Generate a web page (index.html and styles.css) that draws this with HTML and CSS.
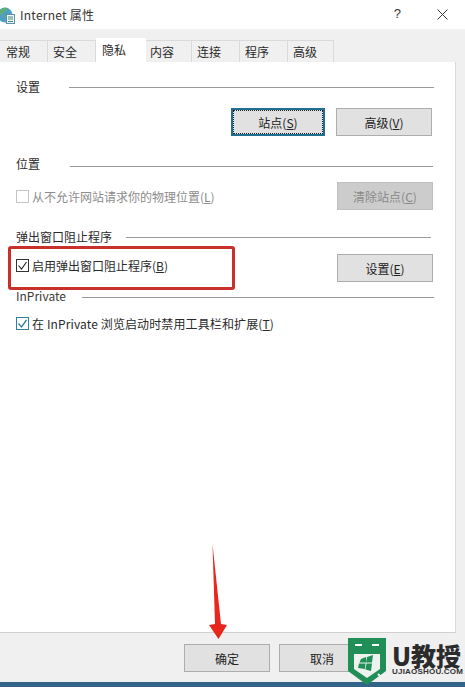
FILE: index.html
```html
<!DOCTYPE html>
<html lang="zh">
<head>
<meta charset="utf-8">
<title>Internet 属性</title>
<link rel="stylesheet" href="styles.css">
</head>
<body>
<div class="dialog">
  <header class="titlebar">
    <svg class="globe" width="16" height="20" viewBox="0 0 16 20">
      <circle cx="6" cy="9" r="7.500" fill="#4f9fc4"/>
      <path d="M0 6c2-4 5-5 8-4 1 2-1 3-3 4 0 2-2 3-4 2zM6 9c2-1 4 0 4 2s-2 3-3 2-2-3-1-4z" fill="#5fae7a"/>
      <rect x="7.500" y="8.500" width="8" height="9" fill="#f4f8fb" stroke="#5a8fb0"/>
      <path d="M9 11h5M9 13h5M9 15.500h5" stroke="#3c8c70"/>
    </svg>
    <span class="title">Internet 属性</span>
    <span class="help">?</span>
    <svg class="close" width="11" height="11" viewBox="0 0 11 11"><path d="M.5.5l10 10M10.500.5l-10 10" stroke="#333" fill="none"/></svg>
  </header>
  <nav class="tabs">
    <span class="tab first">常规</span>
    <span class="tab">安全</span>
    <span class="tab active">隐私</span>
    <span class="tab after-active">内容</span>
    <span class="tab">连接</span>
    <span class="tab">程序</span>
    <span class="tab last">高级</span>
  </nav>
  <main class="panel">
    <div class="heading h-settings"><span>设置</span><i class="rule"></i></div>
    <div class="row row-settings">
      <button class="btn btn-focus">站点(<u>S</u>)</button>
      <button class="btn btn-adv">高级(<u>V</u>)</button>
    </div>
    <div class="heading h-location"><span>位置</span><i class="rule"></i></div>
    <div class="row row-location">
      <label class="check disabled"><span class="box"></span>从不允许网站请求你的物理位置(<u>L</u>)</label>
      <button class="btn btn-disabled">清除站点(<u>C</u>)</button>
    </div>
    <div class="heading h-popup"><span>弹出窗口阻止程序</span><i class="rule"></i></div>
    <div class="row row-popup">
      <label class="check check-up"><span class="box">
        <svg width="13" height="13" viewBox="0 0 13 13"><path d="M2.500 6.500l3 3.500 5-7" fill="none" stroke="#222" stroke-width="1.100"/></svg>
      </span>启用弹出窗口阻止程序(<u>B</u>)</label>
      <button class="btn">设置(<u>E</u>)</button>
    </div>
    <div class="heading h-private"><span>InPrivate</span><i class="rule"></i></div>
    <div class="row row-private">
      <label class="check"><span class="box box-blue">
        <svg width="13" height="13" viewBox="0 0 13 13"><path d="M2.500 6.500l3 3.500 5-7" fill="none" stroke="#2f7f9f" stroke-width="1.300"/></svg>
      </span><span class="private-text">在 InPrivate 浏览启动时禁用工具栏和扩展(<u>T</u>)</span></label>
    </div>
  </main>
  <footer class="footer">
    <button class="btn btn-foot">确定</button>
    <button class="btn btn-foot">取消</button>
  </footer>
  <div class="taskbar"></div>
</div>

<div class="highlight"></div>

<svg class="arrow" width="24" height="100" viewBox="0 0 24 100">
  <path d="M3.500 0L12 80l6 1-8.500 14L0 81l6-1z" fill="#e8261c"/>
</svg>

<div class="mark">
  <svg class="shield" width="39" height="49" viewBox="0 0 39 49">
    <path d="M0 1h38v33L19 48 0 34z" fill="#1f8f57"/>
    <path d="M6 17h26v15L19 41 6 32z" fill="#eef2ef"/>
    <path d="M7 8h7M24 8h7" stroke="#fff" stroke-width="2"/>
    <path d="M13 22l5-2v5.500h-6.500zM19 20l6-2-1 7.500h-6zM11 26.500h6.500L17 32l-7-1zM18.500 26.500H24L23 34l-5.500-1.500z" fill="#1f8f57"/>
    <path d="M30 37l7 7" stroke="#f0f0f0" stroke-width="2"/>
  </svg>
  <div class="mark-text">
    <span class="mark-big">U教授</span>
    <span class="mark-small">UJIAOSHOU.COM</span>
  </div>
</div>
</body>
</html>
```

FILE: styles.css
```css
* { box-sizing: border-box; }
html, body { margin: 0; padding: 0; }
body {
  width: 465px;
  height: 687px;
  overflow: hidden;
  position: relative;
  background: #f0f0f0;
  font-family: "Noto Sans CJK SC", "Noto Sans", sans-serif;
  font-size: 12px;
  color: #2a2a2a;
}
u { text-decoration: underline; }

.dialog { display: flex; flex-direction: column; height: 687px; }

.titlebar {
  height: 29px;
  background: #fff;
  display: flex;
  align-items: center;
  flex: none;
}
.globe { margin-left: -1px; margin-top: 3px; flex: none; }
.title { margin-left: 5px; margin-bottom: 1px; font-size: 12px; color: #333; letter-spacing: .25px; }
.help { margin-left: auto; margin-bottom: 2px; font-size: 13px; color: #333; font-family: "Liberation Sans", sans-serif; }
.close { margin-left: 36px; margin-right: 17px; }

.tabs {
  height: 33px;
  padding-top: 9px;
  display: flex;
  align-items: flex-end;
  flex: none;
  background: #f0f0f0;
}
.tab {
  width: 48px;
  height: 22px;
  line-height: 22px;
  padding-left: 5px;
  background: #f0f0f0;
  border: 1px solid #dadada;
  border-bottom: 0;
  border-left: 0;
}
.first { padding-left: 6px; }
.active {
  width: 50px;
  height: 24px;
  line-height: 22px;
  padding-left: 6px;
  background: #fff;
  border-color: #fff;
}
.after-active { width: 46px; padding-left: 4px; }
.last { width: 46px; }

.panel {
  height: 571px;
  flex: none;
  width: 456px;
  background: #fff;
  border-right: 1px solid #d9d9d9;
  border-bottom: 1px solid #d0d0d0;
  padding-left: 16px;
  display: flex;
  flex-direction: column;
}

.heading { display: flex; align-items: center; height: 18px; width: 418px; flex: none; }
.heading span { margin-bottom: 2px; }
.rule { flex: 1; height: 1px; background: #9a9a9a; }
.h-settings { margin-top: 16px; }
.h-settings .rule { margin-left: 29px; }
.h-location { margin-top: 19px; }
.h-location .rule { margin-left: 30px; margin-top: 4px; margin-right: 1px; }
.h-popup { margin-top: 18px; }
.h-popup .rule { margin-left: 14px; margin-right: 3px; }
.h-private { margin-top: 5px; color: #3a3a3a; }
.h-private .rule { margin-left: 16px; margin-top: 3px; }

.row { display: flex; align-items: center; width: 417px; flex: none; }
.row-settings { margin-top: 12px; justify-content: flex-end; gap: 11px; width: 416px; }
.row-location { margin-top: 9px; justify-content: space-between; }
.row-popup { margin-top: 8px; justify-content: space-between; }
.row-private { margin-top: 10px; }

.btn {
  width: 96px;
  height: 28px;
  padding: 0;
  background: #e1e1e1;
  border: 1px solid #adadad;
  font: inherit;
  color: #222;
}
.btn-focus {
  width: 94px;
  border: 2px solid #1f6f94;
  outline: 1px dotted #222;
  outline-offset: -3px;
}
.btn-disabled { background: #cccccc; border-color: #bfbfbf; color: #8a8a8a; }

.check { display: flex; align-items: center; }
.check-up { margin-bottom: 5px; }
.box {
  width: 13px;
  height: 13px;
  border: 1px solid #333;
  background: #fff;
  margin-right: 3px;
  flex: none;
  display: flex;
}
.box svg { margin: -1px; flex: none; }
.box-blue { border-color: #2f7f9f; }
.disabled { color: #8c8c8c; }
.disabled .box { border-color: #c4c4c4; }
.private-text { letter-spacing: .12px; }

.footer {
  height: 49px;
  flex: none;
  background: #f0f0f0;
  display: flex;
  padding: 11px 0 0 184px;
  gap: 9px;
}
.btn-foot { width: 86px; }
.taskbar {
  flex: 1;
  background: #33658a;
}

.highlight {
  position: absolute;
  left: 8px;
  top: 246px;
  width: 227px;
  height: 44px;
  border: 3px solid #c9302c;
  border-radius: 3px;
}
.arrow { position: absolute; left: 209px; top: 544px; }

.mark {
  position: absolute;
  left: 348px;
  top: 637px;
  display: flex;
  gap: 5px;
}
.shield { flex: none; }
.mark-text { display: flex; flex-direction: column; padding-top: 7px; }
.mark-big {
  font-size: 25px;
  line-height: 22px;
  height: 22px;
  font-weight: 900;
  color: #2b2b2b;
  white-space: nowrap;
}
.mark-small {
  font-family: "Liberation Sans", sans-serif;
  font-size: 8px;
  line-height: 8px;
  margin-top: 2px;
  font-weight: 700;
  letter-spacing: .2px;
  color: #333;
  white-space: nowrap;
}
```
